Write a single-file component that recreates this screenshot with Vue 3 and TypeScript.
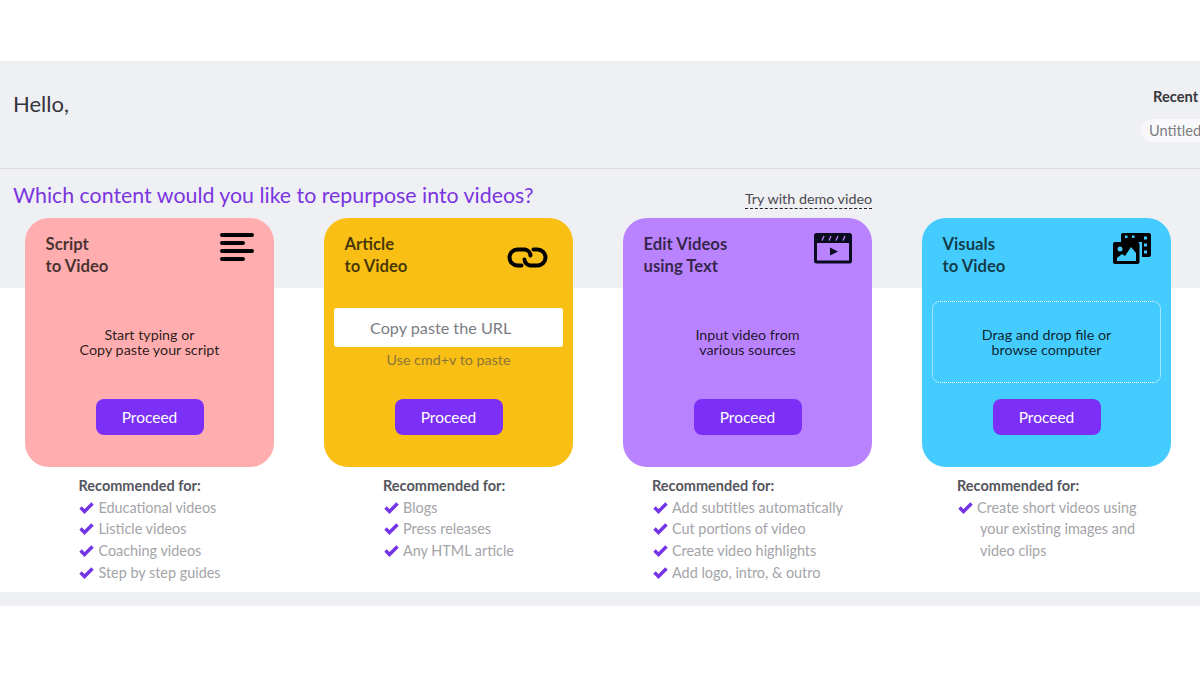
<script setup lang="ts">
// 首页：四种创建入口卡片
interface EntryCard {
  id: string
  title: string[]
  color: string
  body?: string[]
  tips: string[]
}

const cards: EntryCard[] = [
  {
    id: 'script',
    title: ['Script', 'to Video'],
    color: '#ffadae',
    body: ['Start typing or', 'Copy paste your script'],
    tips: ['Educational videos', 'Listicle videos', 'Coaching videos', 'Step by step guides'],
  },
  {
    id: 'article',
    title: ['Article', 'to Video'],
    color: '#f9bf14',
    tips: ['Blogs', 'Press releases', 'Any HTML article'],
  },
  {
    id: 'edit',
    title: ['Edit Videos', 'using Text'],
    color: '#b983ff',
    body: ['Input video from', 'various sources'],
    tips: ['Add subtitles automatically', 'Cut portions of video', 'Create video highlights', 'Add logo, intro, & outro'],
  },
  {
    id: 'visuals',
    title: ['Visuals', 'to Video'],
    color: '#45ccff',
    body: ['Drag and drop file or', 'browse computer'],
    tips: ['Create short videos using your existing images and video clips'],
  },
]
</script>

<template>
  <div class="page">
    <section class="hero">
      <h1 class="hello">Hello,</h1>
      <div class="recent">
        <div class="recent-title">Recent</div>
        <div class="recent-pill">Untitled</div>
      </div>
    </section>

    <section class="content">
      <div class="question">
        <h2>Which content would you like to repurpose into videos?</h2>
        <a class="demo">Try with demo video</a>
      </div>

      <div class="columns">
        <div v-for="card in cards" :key="card.id" class="column">
          <div class="card" :style="{ background: card.color }">
            <div class="card-head">
              <div class="card-title">
                <div v-for="line in card.title" :key="line">{{ line }}</div>
              </div>

              <svg v-if="card.id === 'script'" class="icon" width="34" height="30" viewBox="0 0 34 30">
                <path d="M2 2h30M2 10h21M2 18h30M2 26h21" stroke="#000" stroke-width="4" stroke-linecap="round" />
              </svg>
              <svg v-else-if="card.id === 'article'" class="icon icon-link" width="41" height="21" viewBox="0 0 41 21">
                <g fill="none" stroke="#000" stroke-width="4" stroke-linecap="round">
                  <path d="M14.500 18.500h-4a8 8 0 0 1 0-16H18a6.500 6.500 0 0 1 5.500 6" />
                  <path d="M26.500 2.500h4a8 8 0 0 1 0 16H23a6.500 6.500 0 0 1-5.500-6" />
                </g>
              </svg>
              <svg v-else-if="card.id === 'edit'" class="icon" width="38" height="31" viewBox="0 0 38 31">
                <rect x="1.500" y="1.500" width="35" height="27.500" rx="1" fill="none" stroke="#0b0b20" stroke-width="3" />
                <rect x="1" y="1" width="36" height="9" fill="#0b0b20" />
                <path d="M8 7.500l2-4.500M15 7.500l2-4.500M22 7.500l2-4.500M29 7.500l2-4.500" stroke="#b983ff" stroke-width="1.300" />
                <path d="M16 14.500l8 4-8 4z" fill="#0b0b20" />
              </svg>
              <svg v-else class="icon" width="38" height="31" viewBox="0 0 38 31">
                <path fill="#000" d="M8 2a2 2 0 0 1 2-2h26a2 2 0 0 1 2 2v20a2 2 0 0 1-2 2h-7V9H8z" />
                <path fill="#45ccff" d="M12 2.500h2.500V5H12zM19 2.500h2.500V5H19zM31 3.500h3v3h-3zM31 10.500h3v3h-3zM31 17.500h3v3h-3z" />
                <rect x="0" y="9" width="26.500" height="22" rx="2" fill="#000" />
                <circle cx="7" cy="16" r="2.500" fill="#45ccff" />
                <path fill="#45ccff" d="M4 28v-3l5-4 3 2 6-9 5 6v8z" />
              </svg>
            </div>

            <div class="card-body">
              <div v-if="card.id === 'article'" class="url-box">
                <div class="url-input">Copy paste the URL</div>
                <div class="url-hint">Use cmd+v to paste</div>
              </div>
              <div v-else class="body-text" :class="{ 'drop-zone': card.id === 'visuals' }">
                <div v-for="line in card.body" :key="line">{{ line }}</div>
              </div>
            </div>

            <button class="proceed" type="button">Proceed</button>
          </div>

          <div class="tips">
            <div class="tips-title">Recommended for:</div>
            <div v-for="tip in card.tips" :key="tip" class="tip">
              <svg class="check" width="15" height="12" viewBox="0 0 15 12">
                <path d="M1.500 5.500l4 4 8-8" fill="none" stroke="#7433e6" stroke-width="3.400" />
              </svg>
              <span class="tip-text" :class="{ wrap: card.id === 'visuals' }">{{ tip }}</span>
            </div>
          </div>
        </div>
      </div>
    </section>

    <div class="foot-band"></div>
  </div>
</template>

<style>
html,
body {
  margin: 0;
  background: #fff;
}
</style>

<style scoped>
.page {
  width: 1200px;
  height: 675px;
  overflow: hidden;
  padding-top: 61px;
  box-sizing: border-box;
  font-family: Lato, "Liberation Sans", sans-serif;
  color: #333;
}

.hero {
  height: 107px;
  background: #eff0f4;
  border-bottom: 1px solid #d9d9de;
  display: flex;
  justify-content: space-between;
}

.hello {
  margin: 30px 0 0 13px;
  font-size: 22px;
  font-weight: 400;
  line-height: 26px;
  color: #34343a;
}

.recent {
  width: 59px;
  padding-top: 26px;
  white-space: nowrap;
}

.recent-title {
  margin-left: 12px;
  font-size: 14.700px;
  font-weight: 700;
  line-height: 18px;
  color: #36363c;
}

.recent-pill {
  display: inline-block;
  margin-top: 14px;
  padding: 0 30px 0 8px;
  height: 23px;
  line-height: 23px;
  border-radius: 12px;
  background: #f8f8fa;
  font-size: 14.600px;
  color: #7d7d82;
}

.content {
  background: linear-gradient(#eff0f4 119px, #fff 119px);
  height: 423px;
}

.question {
  position: relative;
  height: 49px;
}

.question h2 {
  margin: 0;
  padding: 12px 0 0 13px;
  font-size: 21.350px;
  font-weight: 400;
  line-height: 28px;
  color: #7a35e0;
}

.demo {
  position: absolute;
  left: 745px;
  top: 21px;
  font-size: 14.300px;
  line-height: 18px;
  color: #4a4a50;
  border-bottom: 1px dashed #222;
}

.columns {
  display: grid;
  grid-template-columns: repeat(4, 249px);
  column-gap: 50px;
  padding-left: 25px;
}

.column {
  display: flex;
  flex-direction: column;
  align-items: center;
}

.card {
  width: 249px;
  height: 249px;
  box-sizing: border-box;
  border-radius: 24px;
  padding: 15px 10px 31px;
  display: flex;
  flex-direction: column;
  align-items: center;
}

.card-head {
  width: 100%;
  height: 44px;
  padding: 0 10px;
  box-sizing: border-box;
  display: flex;
  justify-content: space-between;
  align-items: flex-start;
}

.card-title {
  margin-left: 0.500px;
  font-size: 16.700px;
  font-weight: 700;
  line-height: 22px;
  color: rgba(0, 0, 0, 0.72);
}

.icon {
  flex: none;
}

.icon-link {
  margin-top: 14px;
  margin-right: 5px;
}

.card-body {
  width: 100%;
  height: 82px;
  margin-top: 24px;
}

.body-text {
  height: 100%;
  box-sizing: border-box;
  display: flex;
  flex-direction: column;
  align-items: center;
  justify-content: center;
  font-size: 14.300px;
  line-height: 15px;
  color: rgba(0, 0, 0, 0.85);
}

.drop-zone {
  border: 1px dotted #fff;
  border-radius: 8px;
}

.url-box {
  padding-top: 7px;
  text-align: center;
}

.url-input {
  height: 39px;
  line-height: 39px;
  padding-left: 36px;
  text-align: left;
  background: #fff;
  border-radius: 3px;
  font-size: 16.200px;
  color: #7b7d85;
}

.url-hint {
  margin-top: 4px;
  font-size: 14.300px;
  line-height: 18px;
  color: #8a7538;
}

.proceed {
  width: 108px;
  height: 36px;
  margin-top: 16px;
  padding: 0 0 1px;
  border: 0;
  border-radius: 8px;
  background: #7b2ff7;
  color: #fff;
  font-family: inherit;
  font-size: 15.500px;
}

.tips {
  margin-top: 8px;
  font-size: 14.400px;
  line-height: 21.700px;
  color: #a4a4a9;
}

.tips-title {
  font-size: 14.500px;
  font-weight: 700;
  color: #55555e;
}

.tip {
  display: flex;
}

.check {
  flex: none;
  margin: 5px 4px 0 1px;
}

.tip-text {
  white-space: nowrap;
}

.tip-text.wrap {
  white-space: normal;
  width: 160px;
  margin: 0 -4px 0 3px;
  text-indent: -3px;
}

.foot-band {
  height: 14px;
  background: #eff0f4;
}
</style>
